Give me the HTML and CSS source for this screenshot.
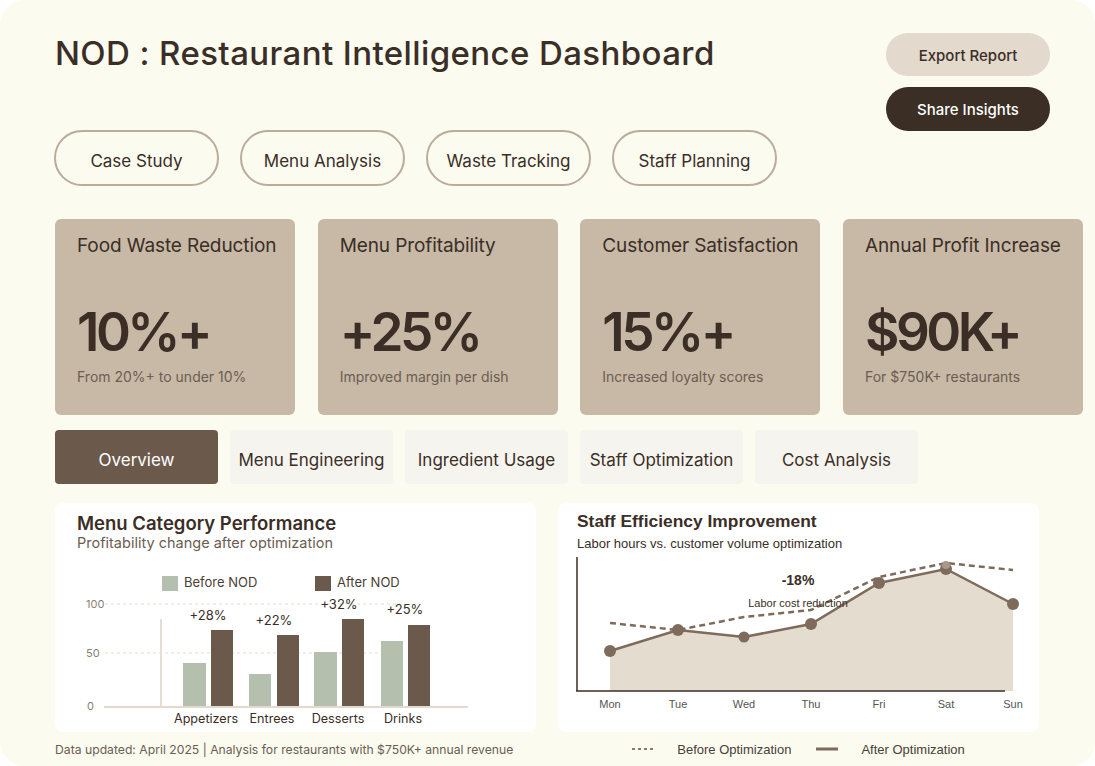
FILE: index.html
```html
<!DOCTYPE html>
<html lang="en">
<head>
<meta charset="utf-8">
<title>NOD : Restaurant Intelligence Dashboard</title>
<link rel="stylesheet" href="styles.css">
</head>
<body>
<div class="page">
  <header class="header">
    <div class="header-main">
      <h1 class="title">NOD : Restaurant Intelligence Dashboard</h1>
      <nav class="pills">
        <a class="pill">Case Study</a>
        <a class="pill">Menu Analysis</a>
        <a class="pill">Waste Tracking</a>
        <a class="pill">Staff Planning</a>
      </nav>
    </div>
    <div class="actions">
      <button class="btn btn-light">Export Report</button>
      <button class="btn btn-dark">Share Insights</button>
    </div>
  </header>

  <section class="kpis">
    <div class="kpi">
      <div class="kpi-title">Food Waste Reduction</div>
      <div class="kpi-value">10%+</div>
      <div class="kpi-sub">From 20%+ to under 10%</div>
    </div>
    <div class="kpi">
      <div class="kpi-title">Menu Profitability</div>
      <div class="kpi-value">+25%</div>
      <div class="kpi-sub">Improved margin per dish</div>
    </div>
    <div class="kpi">
      <div class="kpi-title">Customer Satisfaction</div>
      <div class="kpi-value">15%+</div>
      <div class="kpi-sub">Increased loyalty scores</div>
    </div>
    <div class="kpi">
      <div class="kpi-title">Annual Profit Increase</div>
      <div class="kpi-value">$90K+</div>
      <div class="kpi-sub">For $750K+ restaurants</div>
    </div>
  </section>

  <nav class="tabs">
    <a class="tab active">Overview</a>
    <a class="tab">Menu Engineering</a>
    <a class="tab">Ingredient Usage</a>
    <a class="tab">Staff Optimization</a>
    <a class="tab">Cost Analysis</a>
  </nav>

  <section class="charts">
    <div class="chart-col">
      <div class="card">
        <div class="card-head">
          <div class="card-title">Menu Category Performance</div>
          <div class="card-sub">Profitability change after optimization</div>
        </div>
        <svg class="chart-svg" width="481" height="177" viewBox="55 555 481 177">
          <rect x="162" y="576" width="16" height="15" fill="#b5bfad"/>
          <text x="184" y="587" class="lg-text">Before NOD</text>
          <rect x="315" y="576" width="16" height="15" fill="#6b5a4b"/>
          <text x="337" y="587" class="lg-text">After NOD</text>

          <line x1="105" y1="604" x2="404" y2="604" class="grid"/>
          <line x1="105" y1="653" x2="404" y2="653" class="grid"/>
          <text x="86" y="608" class="ax-text">100</text>
          <text x="86" y="657" class="ax-text">50</text>
          <text x="87" y="710" class="ax-text">0</text>

          <line x1="161" y1="619" x2="161" y2="707" stroke="#e6ded3" stroke-width="2"/>

          <rect x="183" y="663" width="23" height="44" fill="#b5bfad"/>
          <rect x="211" y="630" width="22" height="77" fill="#6b5a4b"/>
          <rect x="249" y="674" width="22" height="33" fill="#b5bfad"/>
          <rect x="277" y="635" width="22" height="72" fill="#6b5a4b"/>
          <rect x="314" y="652" width="23" height="55" fill="#b5bfad"/>
          <rect x="342" y="619" width="22" height="88" fill="#6b5a4b"/>
          <rect x="381" y="641" width="22" height="66" fill="#b5bfad"/>
          <rect x="408" y="625" width="22" height="82" fill="#6b5a4b"/>

          <line x1="104" y1="707" x2="468" y2="707" stroke="#e3d9cc" stroke-width="2"/>

          <text x="208" y="620" class="pct">+28%</text>
          <text x="274" y="625" class="pct">+22%</text>
          <text x="339" y="609" class="pct">+32%</text>
          <text x="405" y="614" class="pct">+25%</text>

          <text x="206" y="723" class="cat">Appetizers</text>
          <text x="272" y="723" class="cat">Entrees</text>
          <text x="338" y="723" class="cat">Desserts</text>
          <text x="403" y="723" class="cat">Drinks</text>
        </svg>
      </div>
      <p class="note">Data updated: April 2025 | Analysis for restaurants with $750K+ annual revenue</p>
    </div>

    <div class="chart-col">
      <div class="card">
        <div class="card-head arial">
          <div class="card-title-b">Staff Efficiency Improvement</div>
          <div class="card-sub-b">Labor hours vs. customer volume optimization</div>
        </div>
        <svg class="chart-svg" width="470" height="177" viewBox="558 555 470 177">
          <polygon points="610,651 678,630 744,637 811,624 879,583 946,569 1013,604 1013,691 610,691" fill="#e5dcd0"/>
          <polyline points="610,623 678,630 744,617 811,610 879,577 946,563 1013,570" fill="none" stroke="#7e6b5b" stroke-width="2.5" stroke-dasharray="6 4"/>
          <polyline points="610,651 678,630 744,637 811,624 879,583 946,569 1013,604" fill="none" stroke="#7e6b5b" stroke-width="2.5"/>
          <circle cx="610" cy="651" r="6" fill="#7e6b5b"/>
          <circle cx="678" cy="630" r="6" fill="#7e6b5b"/>
          <circle cx="744" cy="637" r="5.5" fill="#7e6b5b"/>
          <circle cx="811" cy="624" r="6" fill="#7e6b5b"/>
          <circle cx="879" cy="583" r="6" fill="#7e6b5b"/>
          <circle cx="946" cy="569" r="6" fill="#7e6b5b"/>
          <circle cx="946" cy="565" r="4" fill="#a8978a"/>
          <circle cx="1013" cy="604" r="6" fill="#7e6b5b"/>
          <line x1="577" y1="557" x2="577" y2="691" stroke="#3a2e26" stroke-width="1.5"/>
          <line x1="576" y1="691" x2="1005" y2="691" stroke="#3a2e26" stroke-width="1.5"/>
          <text x="798" y="585" class="big-note">-18%</text>
          <text x="798" y="607" class="small-note">Labor cost reduction</text>
          <text x="610" y="708" class="day">Mon</text>
          <text x="678" y="708" class="day">Tue</text>
          <text x="744" y="708" class="day">Wed</text>
          <text x="811" y="708" class="day">Thu</text>
          <text x="879" y="708" class="day">Fri</text>
          <text x="946" y="708" class="day">Sat</text>
          <text x="1013" y="708" class="day">Sun</text>
        </svg>
      </div>
      <div class="legend">
        <div class="legend-item">
          <svg width="22" height="4" viewBox="0 0 22 4"><line x1="0" y1="2" x2="22" y2="2" stroke="#8a7868" stroke-width="2" stroke-dasharray="3 3"/></svg>
          <span>Before Optimization</span>
        </div>
        <div class="legend-item">
          <svg width="22" height="4" viewBox="0 0 22 4"><line x1="0" y1="2" x2="22" y2="2" stroke="#7e6b5b" stroke-width="3"/></svg>
          <span>After Optimization</span>
        </div>
      </div>
    </div>
  </section>
</div>
</body>
</html>
```

FILE: styles.css
```css
* { box-sizing: border-box; }

html, body {
  margin: 0;
  padding: 0;
  background: #ffffff;
}

body {
  font-family: Inter, "Noto Sans", "DejaVu Sans", sans-serif;
  color: #3a2e26;
}

.page {
  width: 1095px;
  height: 766px;
  background: #fbfbf0;
  border-radius: 24px;
  padding: 33px 12px 0 55px;
  overflow: hidden;
}

.header {
  display: flex;
  justify-content: space-between;
  align-items: flex-start;
  margin-right: 33px;
}

.title {
  margin: 1px 0 0;
  font-size: 33px;
  line-height: 38px;
  font-weight: 500;
  letter-spacing: 0.4px;
  white-space: nowrap;
  color: #3a2e26;
}

.pills {
  display: flex;
  gap: 21px;
  margin-top: 58px;
  margin-left: -1px;
}

.pill {
  width: 165px;
  height: 56px;
  border: 2px solid #baab9a;
  border-radius: 28px;
  display: flex;
  align-items: center;
  justify-content: center;
  padding-top: 5px;
  font-size: 17px;
  color: #3a2e26;
}

.actions {
  display: flex;
  flex-direction: column;
  gap: 11px;
}

.btn {
  width: 164px;
  height: 43px;
  border: none;
  border-radius: 22px;
  padding-top: 2px;
  font-family: inherit;
  font-size: 15px;
  font-weight: 500;
}

.btn-light {
  background: #e3d9cd;
  color: #3a2e26;
}

.btn-dark {
  height: 44px;
  background: #3a2e25;
  color: #ffffff;
}

.kpis {
  display: grid;
  grid-template-columns: repeat(4, 1fr);
  gap: 22.67px;
  margin-top: 33px;
}

.kpi {
  height: 196px;
  background: #c7b9a6;
  border-radius: 6px;
  padding: 15px 8px 0 22px;
}

.kpi-title {
  font-size: 19px;
  line-height: 23px;
  letter-spacing: -0.1px;
  white-space: nowrap;
  color: #3a2e26;
}

.kpi-value {
  margin-top: 47px;
  font-size: 53px;
  line-height: 56px;
  font-weight: 600;
  letter-spacing: -3.5px;
  white-space: nowrap;
  color: #3a2e26;
}

.kpi-sub {
  margin-top: 8px;
  font-size: 14px;
  line-height: 18px;
  white-space: nowrap;
  color: #6b5d52;
}

.tabs {
  display: flex;
  gap: 12px;
  margin-top: 15px;
}

.tab {
  width: 163px;
  height: 54px;
  border-radius: 4px;
  background: #f6f4ef;
  display: flex;
  align-items: center;
  justify-content: center;
  padding-top: 5px;
  font-size: 17px;
  color: #3a2e26;
}

.tab.active {
  background: #6b5a4b;
  color: #ffffff;
}

.charts {
  display: grid;
  grid-template-columns: 481px 481px;
  gap: 22px;
  margin-top: 19px;
}

.card {
  background: #ffffff;
  border-radius: 8px;
  height: 229px;
  overflow: hidden;
}

.card-head {
  height: 52px;
  padding: 9px 22px 0;
}

.card-title {
  font-size: 18.5px;
  line-height: 22px;
  font-weight: 600;
  color: #3a2e26;
}

.card-sub {
  font-size: 14.5px;
  line-height: 18px;
  color: #6b5d52;
}

.arial {
  font-family: "Liberation Sans", Arial, sans-serif;
  padding: 8px 19px 0;
}

.card-title-b {
  font-size: 17.4px;
  line-height: 20px;
  font-weight: 700;
  color: #3a2e26;
}

.card-sub-b {
  margin-top: 5px;
  font-size: 13px;
  line-height: 16px;
  color: #3a2e26;
}

.chart-svg {
  display: block;
}

.grid {
  stroke: #e2dbd0;
  stroke-width: 1;
  stroke-dasharray: 3 3;
}

.lg-text {
  font-family: Inter, sans-serif;
  font-size: 13px;
  fill: #4a3e35;
}

.ax-text {
  font-family: Inter, sans-serif;
  font-size: 11px;
  fill: #8a7e73;
}

.pct {
  font-family: Inter, sans-serif;
  font-size: 13px;
  fill: #3a2e26;
  text-anchor: middle;
}

.cat {
  font-family: Inter, sans-serif;
  font-size: 12.6px;
  fill: #3a2e26;
  text-anchor: middle;
}

.big-note {
  font-family: "Liberation Sans", Arial, sans-serif;
  font-size: 14px;
  font-weight: 700;
  fill: #3a2e26;
  text-anchor: middle;
}

.small-note {
  font-family: "Liberation Sans", Arial, sans-serif;
  font-size: 11px;
  fill: #3a2e26;
  text-anchor: middle;
}

.day {
  font-family: "Liberation Sans", Arial, sans-serif;
  font-size: 11px;
  fill: #555555;
  text-anchor: middle;
}

.note {
  margin: 9px 0 0;
  font-size: 12.2px;
  line-height: 18px;
  white-space: nowrap;
  color: #6b5d52;
}

.legend {
  display: flex;
  justify-content: center;
  gap: 25px;
  margin-top: 8px;
  height: 18px;
  font-family: "Liberation Sans", Arial, sans-serif;
  font-size: 13px;
  color: #4a3e35;
}

.legend-item {
  display: flex;
  align-items: center;
  gap: 23px;
}

.legend-item svg {
  display: block;
}
```
